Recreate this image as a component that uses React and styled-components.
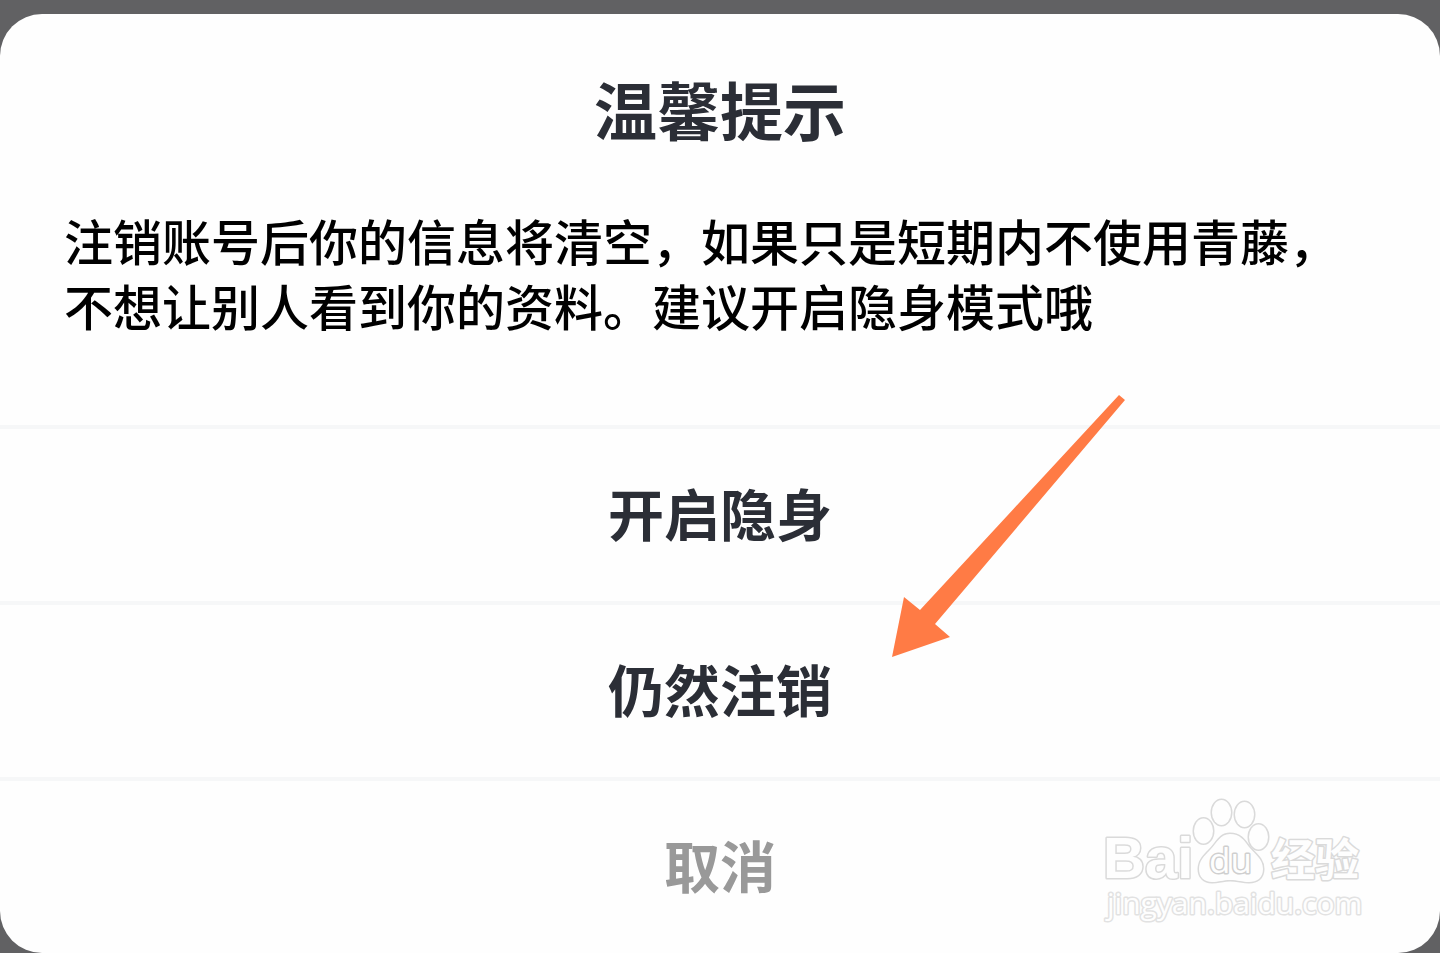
import React from "react";
import styled, { createGlobalStyle } from "styled-components";

const GlobalStyle = createGlobalStyle`
  * { box-sizing: border-box; }
  body {
    margin: 0;
    background: #616163;
    font-family: "Noto Sans CJK SC", sans-serif;
  }
`;

const Backdrop = styled.main`
  min-height: 100vh;
  padding-top: 14px;
  background: #616163;
`;

const Dialog = styled.section`
  position: relative;
  overflow: hidden;
  border-radius: 42px;
  background: #fefefe;
`;

const Content = styled.div`
  padding: 52px 64px 88px;
`;

const Title = styled.h1`
  margin: 0 0 57px;
  color: #2b2e36;
  font-size: 63px;
  font-weight: 700;
  line-height: 84px;
  text-align: center;
`;

const Message = styled.p`
  margin: 0;
  color: #000;
  font-size: 49px;
  font-weight: 500;
  line-height: 65px;
`;

const Actions = styled.div`
  display: flex;
  flex-direction: column;
`;

const Action = styled.button`
  height: 176px;
  padding: 0 0 6px;
  border: 0;
  border-top: 4px solid #f6f7f8;
  background: transparent;
  color: ${({ $muted }) => ($muted ? "#999" : "#2b2e36")};
  font-family: inherit;
  font-size: 56px;
  font-weight: 700;
  line-height: 80px;
  text-align: center;
  cursor: pointer;
`;

const Pointer = styled.svg`
  position: absolute;
  top: 380px;
  left: calc(50% + 170px);
  width: 238px;
  height: 266px;
  pointer-events: none;
`;

const Watermark = styled.svg`
  position: absolute;
  right: 70px;
  bottom: 24px;
  width: 270px;
  height: 136px;
  pointer-events: none;
  fill: #fefefe;
  stroke: #dadada;
  stroke-width: 3px;
  stroke-linejoin: round;
  paint-order: stroke;
`;

const BrandText = styled.text`
  font-family: "Liberation Sans", sans-serif;
  font-size: 58px;
  font-weight: 700;
`;

const PawText = styled.text`
  font-family: "Open Sans", sans-serif;
  font-size: 35px;
  font-weight: 500;
  stroke: #cfcfcf;
`;

const ChannelText = styled.text`
  font-family: "Noto Sans CJK SC", sans-serif;
  font-size: 44px;
  font-weight: 700;
`;

const SiteText = styled.text`
  font-family: "Open Sans", sans-serif;
  font-size: 30px;
  font-weight: 400;
  stroke: #e2e2e2;
`;

export default function App() {
  return (
    <>
      <GlobalStyle />
      <Backdrop>
        <Dialog role="dialog" aria-labelledby="title" aria-describedby="message">
          <Content>
            <Title id="title">温馨提示</Title>
            <Message id="message">
              注销账号后你的信息将清空，如果只是短期内不使用青藤，不想让别人看到你的资料。建议开启隐身模式哦
            </Message>
          </Content>
          <Actions>
            <Action type="button">开启隐身</Action>
            <Action type="button">仍然注销</Action>
            <Action type="button" $muted>取消</Action>
          </Actions>
          <Pointer viewBox="0 0 238 266" aria-hidden="true">
            <path d="M2 263 L14 203 L30 216 L229 1 L235 6 L45 230 L60 243 Z" fill="#ff7b45" />
          </Pointer>
          <Watermark viewBox="0 0 270 136">
            <BrandText x="3" y="85">Bai</BrandText>
            <ellipse cx="103.500" cy="38" rx="9.500" ry="12.500" />
            <ellipse cx="121.500" cy="19.500" rx="9.500" ry="12.500" />
            <ellipse cx="144.500" cy="21.500" rx="9.500" ry="12.500" />
            <ellipse cx="158.500" cy="44" rx="9.500" ry="12.500" />
            <path d="M130 41 C140 41 144 47 149 54 C155 61 163 66 163 76 C163 85 157 89 149 89 C142 89 138 87 130 87 C123 87 119 89 112 89 C104 89 99 84 99 76 C99 68 104 63 110 57 C117 50 120 41 130 41 Z" />
            <PawText x="109" y="80">du</PawText>
            <ChannelText x="171" y="83">经验</ChannelText>
            <SiteText x="7" y="121">jingyan.baidu.com</SiteText>
          </Watermark>
        </Dialog>
      </Backdrop>
    </>
  );
}
